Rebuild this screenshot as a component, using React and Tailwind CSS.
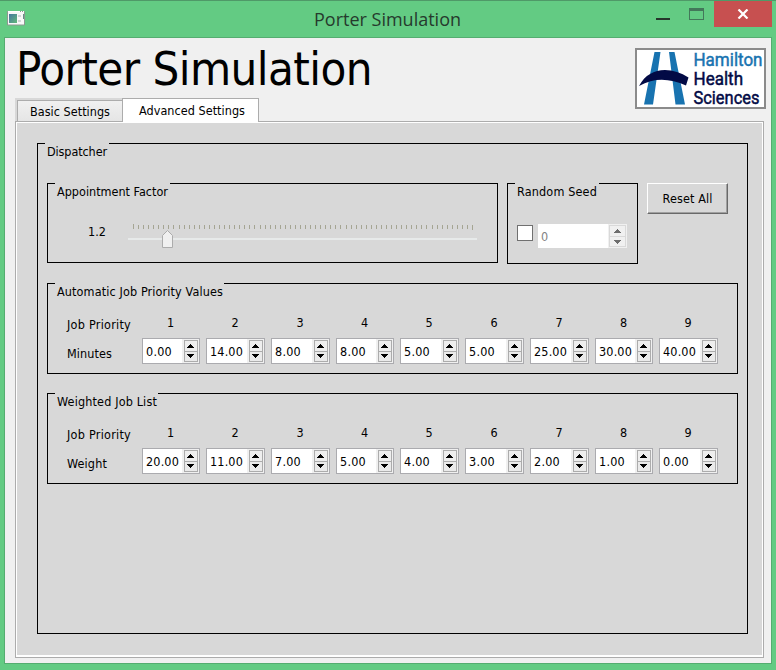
import { useLayoutEffect, useRef, useState } from "react";

const PRIORITIES = ["1", "2", "3", "4", "5", "6", "7", "8", "9"];
const MINUTES = ["0.00", "14.00", "8.00", "8.00", "5.00", "5.00", "25.00", "30.00", "40.00"];
const WEIGHTS = ["20.00", "11.00", "7.00", "5.00", "4.00", "3.00", "2.00", "1.00", "0.00"];
const TICKS = Array.from({ length: 68 }, (_, i) => i);
const COLUMNS = "grid grid-cols-[58px_59px_59px_58px_59px_59px_59px_58px_59px] gap-x-1.5";

/* Text run whose tracking is adjusted so it fills the given advance width. */
function Text({ w, children, className = "" }) {
  const ref = useRef(null);
  const [spacing, setSpacing] = useState(0);
  useLayoutEffect(() => {
    const el = ref.current;
    el.style.letterSpacing = "0px";
    const natural = el.getBoundingClientRect().width;
    const next = (w - natural) / children.length;
    el.style.letterSpacing = next + "px";
    setSpacing(next);
  }, [w, children]);
  return (
    <span ref={ref} className={"inline-block whitespace-nowrap " + className} style={{ letterSpacing: spacing + "px" }}>
      {children}
    </span>
  );
}

function Group({ title, w, gap, className = "", children }) {
  return (
    <section className={"relative border border-black " + className}>
      <h2 className={"absolute -top-px left-[7px] h-5 bg-[#d8d8d8] pl-[2px] leading-[18px] " + gap}>
        <Text w={w}>{title}</Text>
      </h2>
      {children}
    </section>
  );
}

function Arrow({ down, className }) {
  return (
    <svg width="7" height="4" viewBox="0 0 7 4" shapeRendering="crispEdges" className={className}>
      <path d={down ? "M0 0h7v1H0zM1 1h5v1H1zM2 2h3v1H2zM3 3h1v1H3z" : "M3 0h1v1H3zM2 1h3v1H2zM1 2h5v1H1zM0 3h7v1H0z"} fill="currentColor" />
    </svg>
  );
}

function Spin({ value }) {
  return (
    <div className="flex h-[26px] border border-[#ababaf] bg-white">
      <div className="flex-1 pl-[3px] leading-[26px]">
        <Text w={value.length === 5 ? 33 : 26}>{value}</Text>
      </div>
      <div className="flex w-[17px] flex-col bg-[#f0f0f0] py-px pr-px pl-[2px] text-black">
        <div className="flex h-3 items-center border border-[#acacac] bg-[#eeeeee] pl-[2px]"><Arrow /></div>
        <div className="-mt-px flex h-3 items-center border border-[#acacac] bg-[#eaeaea] pl-[2px]"><Arrow down /></div>
      </div>
    </div>
  );
}

function PriorityGroup({ title, w, gap, label, labelW, values, className }) {
  return (
    <Group title={title} w={w} gap={gap} className={"h-[91px] pt-[30px] pl-[19px] " + className}>
      <div className="flex">
        <div className="w-[75px] pt-[1px]">
          <div className="h-[29px] leading-[20px]"><Text w={64}>Job Priority</Text></div>
          <div className="leading-[20px]"><Text w={labelW}>{label}</Text></div>
        </div>
        <div>
          <div className={COLUMNS + " h-6 text-center leading-[18px]"}>
            {PRIORITIES.map((p) => <span key={p} className="pr-px">{p}</span>)}
          </div>
          <div className={COLUMNS}>
            {values.map((v, i) => <Spin key={i} value={v} />)}
          </div>
        </div>
      </div>
    </Group>
  );
}

function Logo() {
  return (
    <svg width="131" height="61" viewBox="635 48 131 61" className="mt-[10px] mr-[5px] shrink-0 overflow-visible">
      <rect x="636" y="49" width="129" height="59" fill="#fff" stroke="#8b8b8b" strokeWidth="2" />
      <path d="M654.500 52h6l-7.500 52.500h-9zM669 52h5.500l10.500 52.500h-9.500z" fill="#1873b0" />
      <path d="M639 86C645 75 654 70 665 70C673 70 681 72.500 688.500 77.500L686 85.500C670 78.500 655 77 639 86Z" fill="#020a45" />
      <g fontFamily="Roboto, 'Open Sans', sans-serif" fontSize="19" fontWeight="400" strokeWidth="0.5">
        <text x="693.500" y="65.800" textLength="69" lengthAdjust="spacingAndGlyphs" fill="#1873b0" stroke="#1873b0">Hamilton</text>
        <text x="693.500" y="84.800" textLength="49.500" lengthAdjust="spacingAndGlyphs" fill="#020a45" stroke="#020a45">Health</text>
        <text x="693.500" y="104.100" textLength="66" lengthAdjust="spacingAndGlyphs" fill="#020a45" stroke="#020a45">Sciences</text>
      </g>
    </svg>
  );
}

function TitleBar() {
  return (
    <header className="flex h-[37px] border-t border-[#4f9968]">
      <svg width="19" height="16" viewBox="0 0 19 16" className="mt-[10px] ml-[7px] shrink-0">
        <defs>
          <linearGradient id="pane" x1="0" y1="0" x2="1" y2="1"><stop stopColor="#4577a0" /><stop offset="1" stopColor="#62b879" /></linearGradient>
        </defs>
        <path d="M.5 .500h17v13.500h-17z" fill="#f8f8f8" stroke="#8d9791" />
        <path d="M1 .500h12M14 .500h1M16 .500h1" stroke="#fff" />
        <path d="M2 3h8v9H2z" fill="url(#pane)" />
        <path d="M11 4h3v2h-3zM11 9h3v2h-3z" fill="#d3d6d6" />
        <path d="M16.500 3v5" stroke="#658f85" />
      </svg>
      <h1 className="flex-1 pl-[288px] font-['Open_Sans','Noto_Sans',sans-serif] text-[18px] leading-[36px] text-[#263a2d]">
        <Text w={147}>Porter Simulation</Text>
      </h1>
      <div className="mt-[17px] mr-[19px] h-[2px] w-[14px] bg-[#26352b]" />
      <div className="mt-[7px] mr-[10px] h-3 w-[15px] border border-t-[3px] border-[#43785a]" />
      <div className="mr-1 flex h-[26px] w-[58px] items-center justify-center bg-[#c75050]">
        <svg width="12" height="10" viewBox="0 0 12 10" className="-mt-px mr-px"><path d="M1.500.5l9 9M10.500.5l-9 9" stroke="#fff" strokeWidth="2.200" /></svg>
      </div>
    </header>
  );
}

export default function App() {
  return (
    <div className="flex h-[670px] w-[776px] flex-col overflow-hidden bg-[#63cb83] font-['DejaVu_Sans_Condensed','DejaVu_Sans',sans-serif] text-[12.500px] text-black">
      <TitleBar />
      <main className="mx-1 h-[627px] border border-[#55ad70] bg-[#f0f0f0]">
        <div className="flex h-[60px] justify-between">
          <div className="pl-[11px] text-[47px] leading-[61px]"><Text w={356}>Porter Simulation</Text></div>
          <Logo />
        </div>
        <nav className="relative flex h-6 items-end pl-[10px]">
          <div className="flex h-6 border-t-2 border-l-2 border-[#d8d8d8]">
            <div className="h-[22px] w-[106px] border border-b-0 border-[#acacac] bg-linear-to-b from-[#f0f0f0] to-[#e5e5e5] pl-3 leading-[22px]"><Text w={80}>Basic Settings</Text></div>
          </div>
          <div className="-ml-px h-6 w-[137px] border border-b-0 border-[#acacac] bg-white pl-4 leading-6"><Text w={106}>Advanced Settings</Text></div>
        </nav>
        <div className="relative -mt-px ml-[10px] h-[537px] w-[749px] border border-[#acacac]">
          <div className="absolute -top-px left-[107px] h-px w-[135px] bg-white" />
          <div className="h-full border border-b-2 border-white bg-[#d8d8d8] pt-5 pl-5">
            <Group title="Dispatcher" w={60} gap="w-[64px]" className="h-[491px] w-[711px] pt-[39px] pl-[9px]">
              <div className="flex items-start">
                <Group title="Appointment Factor" w={111} gap="w-[115px]" className="h-20 w-[451px] pt-[38px] pl-10">
                  <div className="flex">
                    <div className="w-10 leading-[20px]"><Text w={18}>1.2</Text></div>
                    <svg width="350" height="28" viewBox="128 222 350 28" shapeRendering="crispEdges">
                      {TICKS.map((i) => (
                        <rect key={i} x={Math.round(133 + i * 5.06)} y={i === 0 ? 224 : 225} width="1" height={i === 0 || i === 67 ? 5 : 4} fill="#a5a593" />
                      ))}
                      <rect x="128" y="238" width="349" height="2" fill="#e7eaea" />
                      <path d="M162.500 235.500l5-5 5 5v12h-10z" fill="#f0f0f0" stroke="#acacac" shapeRendering="auto" />
                    </svg>
                  </div>
                </Group>
                <Group title="Random Seed" w={80} gap="w-[84px]" className="ml-[9px] h-[81px] w-[131px] pt-10 pl-[9px]">
                  <div className="flex">
                    <div className="mt-px h-4 w-4 border border-[#707070] bg-white" />
                    <div className="ml-[5px] flex h-6 w-[89px] bg-white text-[#838383]">
                      <div className="flex-1 pl-[3px] leading-[26px]">0</div>
                      <div className="flex w-[19px] flex-col bg-[#f0f0f0] p-px text-[#6d6d6d]">
                        <div className="flex h-3 w-[17px] items-center justify-center border border-[#d9d9d9]"><Arrow /></div>
                        <div className="-mt-px flex h-[11px] w-[17px] items-center justify-center border border-[#d9d9d9]"><Arrow down /></div>
                      </div>
                    </div>
                  </div>
                </Group>
                <button className="ml-[9px] h-[31px] w-[81px] border border-t-white border-l-white border-r-[#696969] border-b-[#696969] bg-[#d8d8d8] pt-[2px] text-center shadow-[inset_-1px_-1px_0_#a0a0a0]"><Text w={50}>Reset All</Text></button>
              </div>
              <PriorityGroup title="Automatic Job Priority Values" w={166} gap="w-[169px]" label="Minutes" labelW={45} values={MINUTES} className="mt-[19px] w-[691px]" />
              <PriorityGroup title="Weighted Job List" w={100} gap="w-[103px]" label="Weight" labelW={40} values={WEIGHTS} className="mt-[19px] w-[691px]" />
            </Group>
          </div>
        </div>
      </main>
    </div>
  );
}
